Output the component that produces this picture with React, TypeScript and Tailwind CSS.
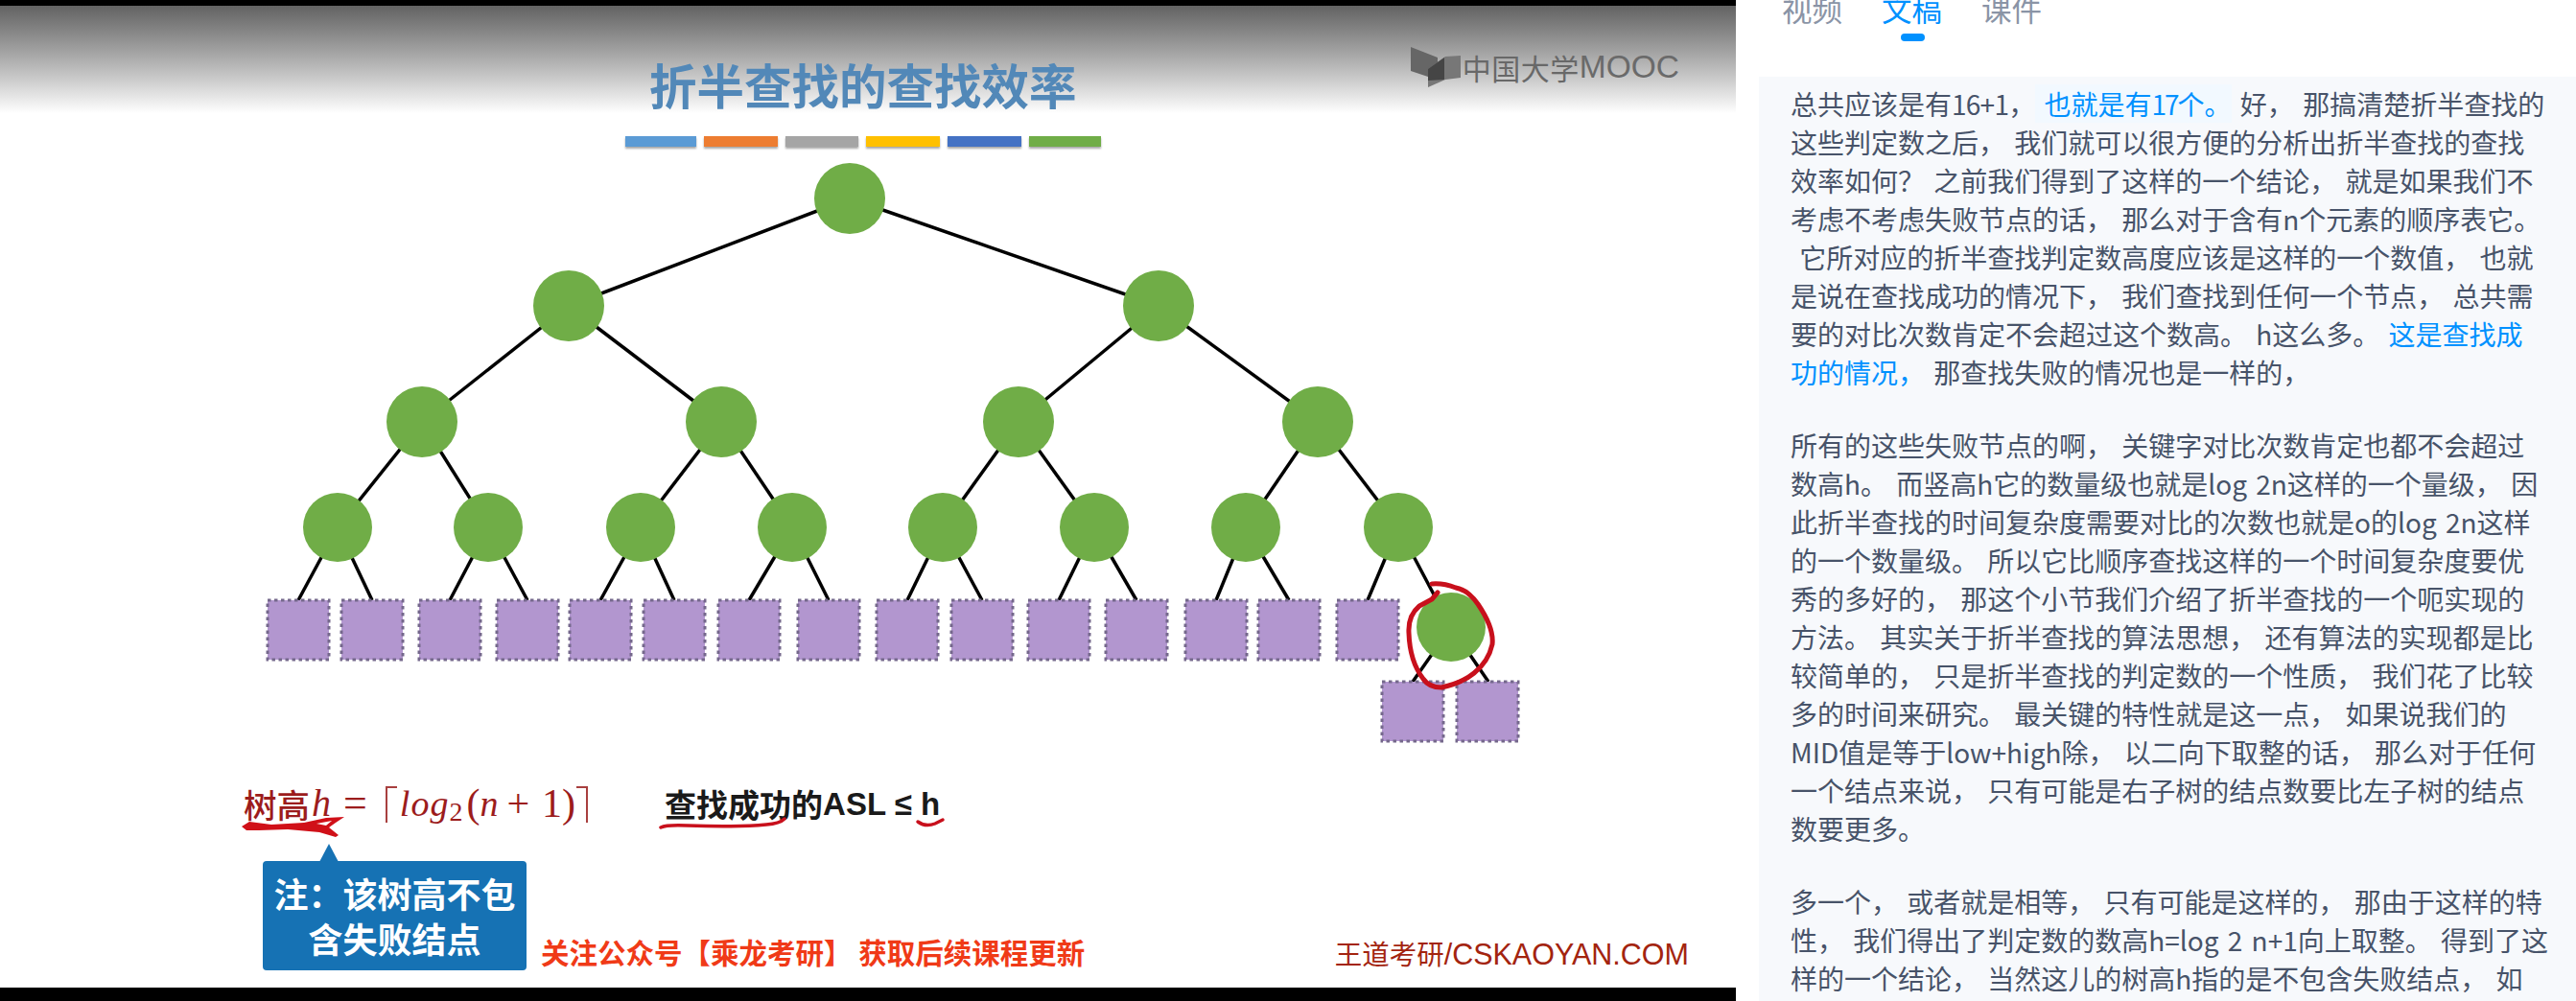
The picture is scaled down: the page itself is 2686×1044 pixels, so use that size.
const cjk = "[font-family:'Noto_Sans_CJK_SC',sans-serif]";
const serif = "[font-family:'Liberation_Serif',serif]";
const sans = "[font-family:'Liberation_Sans',sans-serif]";

const barColors = [
  { w: "w-[74px]", bg: "bg-[#5b9bd5]" },
  { w: "w-[77px]", bg: "bg-[#ed7d31]" },
  { w: "w-[76px]", bg: "bg-[#a5a5a5]" },
  { w: "w-[77px]", bg: "bg-[#ffc000]" },
  { w: "w-[77px]", bg: "bg-[#4472c4]" },
  { w: "w-[75px]", bg: "bg-[#70ad47]" },
];

const level2 = [593, 1208];
const level3 = [440, 752, 1062, 1374];
const level4 = [352, 509, 668, 826, 983, 1141, 1299, 1458];
const leafs = [311, 388, 469, 550, 626, 703, 781, 864, 946, 1024, 1104, 1185, 1268, 1344, 1426];

function Tree() {
  const edges: [number, number, number, number][] = [];
  level2.forEach((x) => edges.push([886, 207, x, 319]));
  level3.forEach((x, i) => edges.push([level2[Math.floor(i / 2)], 319, x, 440]));
  level4.forEach((x, i) => edges.push([level3[Math.floor(i / 2)], 440, x, 550]));
  leafs.forEach((x, i) => edges.push([level4[Math.floor(i / 2)], 550, x, 626]));
  edges.push([1458, 550, 1513, 654], [1513, 654, 1473, 711], [1513, 654, 1552, 711]);

  return (
    <svg width="1810" height="620" viewBox="0 160 1810 620" className="block mt-[7px]">
      {edges.map((e, i) => (
        <line key={i} x1={e[0]} y1={e[1]} x2={e[2]} y2={e[3]} stroke="#000" strokeWidth="3.5" />
      ))}
      {[886, ...level2].map((x, i) => (
        <ellipse key={x} cx={x} cy={i === 0 ? 207 : 319} rx="37" ry="37" fill="#70ad47" />
      ))}
      {level3.map((x) => (
        <circle key={x} cx={x} cy="440" r="37" fill="#70ad47" />
      ))}
      {level4.map((x) => (
        <circle key={x} cx={x} cy="550" r="36" fill="#70ad47" />
      ))}
      <circle cx="1513" cy="654" r="36" fill="#70ad47" />
      {leafs.map((x) => (
        <rect key={x} x={x - 32} y="626" width="64" height="62" fill="#b296cf" stroke="#75688c" strokeWidth="3" strokeDasharray="3.5 3.5" />
      ))}
      {[1473, 1551].map((x) => (
        <rect key={x} x={x - 32} y="711" width="64" height="62" fill="#b296cf" stroke="#75688c" strokeWidth="3" strokeDasharray="3.5 3.5" />
      ))}
      <path
        d="M1499 618 L1493 625 L1480 632 Q1468 642 1469 660 Q1470 690 1484 708 Q1490 717 1503 717 Q1525 712 1537 702 Q1552 690 1556 672 Q1558 655 1541 630 Q1530 615 1518 613 Q1505 608 1493 609"
        fill="none"
        stroke="#c8101c"
        strokeWidth="5"
        strokeLinecap="round"
        strokeLinejoin="round"
      />
    </svg>
  );
}

function MoocLogo() {
  return (
    <div className="flex items-center">
      <svg width="54" height="44" viewBox="0 0 54 44" className="shrink-0">
        <path d="M0 1 L28 12 L28 36 L18 32 L0 26 Z" fill="#666" />
        <path d="M18 24 L36 11 L52 10 L52 33 L36 35 L18 43 Z" fill="#777" />
        <path d="M18 24 L35 12 L35 35 L18 36 Z" fill="#454545" />
      </svg>
      <span className={`${cjk} text-[30px] leading-none tracking-[0.5px] text-[#686868]`}>中国大学</span>
      <span className={`${sans} text-[33.5px] leading-none text-[#6a6a6a]`}>MOOC</span>
    </div>
  );
}

function Formula() {
  const bracket = "inline-block w-[12px] h-[38px] mt-[2px] border-t-2 border-[#a8403f]";
  return (
    <div className="relative flex items-center h-[44px] text-[#9c1c1c]">
      <span className={`${cjk} text-[34.5px] leading-none font-medium`}>树高</span>
      <span className={`${serif} italic text-[40px] leading-none ml-[2px]`}>h</span>
      <span className={`${serif} text-[44px] leading-none ml-[13px]`}>=</span>
      <span className={`${bracket} border-l-2 ml-[19px] mr-[3px]`} />
      <span className={`${serif} italic text-[38px] leading-none tracking-[1px]`}>log</span>
      <span className={`${serif} text-[28px] leading-none mt-[18px]`}>2</span>
      <span className={`${serif} text-[42px] leading-none ml-[4px]`}>(</span>
      <span className={`${serif} italic text-[38px] leading-none`}>n</span>
      <span className={`${serif} text-[42px] leading-none ml-[9px]`}>+</span>
      <span className={`${serif} text-[42px] leading-none ml-[13px]`}>1)</span>
      <span className={`${bracket} border-r-2 ml-[1px]`} />
      <svg width="112" height="26" viewBox="0 0 112 26" className="absolute -left-[4px] top-[34px]">
        <path
          fillRule="evenodd"
          d="M2 12 L10 7 L33 10 L67 8 L90 3 L109 2 L100 8 L93 13 L103 21 L100 23 L83 18 L50 15 L20 16 L7 16 Z M80 9 L96 6 L90 11 Z"
          fill="#d01018"
        />
      </svg>
    </div>
  );
}

function Asl() {
  return (
    <div className={`${cjk} relative flex items-center h-[44px] ml-[80px] text-[33px] font-bold leading-none text-[#1a1a1a]`}>
      <span>查找成功的</span>
      <span className={sans}>ASL ≤ h</span>
      <svg width="300" height="16" viewBox="0 0 300 16" className="absolute -left-[6px] top-[36px]">
        <path d="M2 11 Q8 8 30 9 Q80 11 112 8 Q126 7 131 2" fill="none" stroke="#c8101c" strokeWidth="3.5" strokeLinecap="round" />
        <path d="M270 5 Q278 11 288 7 L296 3" fill="none" stroke="#c8101c" strokeWidth="3.5" strokeLinecap="round" />
      </svg>
    </div>
  );
}

function Callout() {
  return (
    <div className={`${cjk} relative flex flex-col items-center justify-center w-[275px] h-[114px] rounded-[4px] bg-[#1672b4] text-[36px] font-bold leading-[47px] text-white shrink-0`}>
      <span className="absolute -top-[18px] left-[59px] w-0 h-0 border-l-[10px] border-r-[10px] border-b-[19px] border-l-transparent border-r-transparent border-b-[#1672b4]" />
      <span>注：该树高不包</span>
      <span>含失败结点</span>
    </div>
  );
}

const para1 = [
  "这些判定数之后， 我们就可以很方便的分析出折半查找的查找",
  "效率如何？ 之前我们得到了这样的一个结论， 就是如果我们不",
  "考虑不考虑失败节点的话， 那么对于含有n个元素的顺序表它。",
  " 它所对应的折半查找判定数高度应该是这样的一个数值， 也就",
  "是说在查找成功的情况下， 我们查找到任何一个节点， 总共需",
];

const para2 = [
  "所有的这些失败节点的啊， 关键字对比次数肯定也都不会超过",
  "数高h。 而竖高h它的数量级也就是log 2n这样的一个量级， 因",
  "此折半查找的时间复杂度需要对比的次数也就是o的log 2n这样",
  "的一个数量级。 所以它比顺序查找这样的一个时间复杂度要优",
  "秀的多好的， 那这个小节我们介绍了折半查找的一个呃实现的",
  "方法。 其实关于折半查找的算法思想， 还有算法的实现都是比",
  "较简单的， 只是折半查找的判定数的一个性质， 我们花了比较",
  "多的时间来研究。 最关键的特性就是这一点， 如果说我们的",
  "MID值是等于low+high除， 以二向下取整的话， 那么对于任何",
  "一个结点来说， 只有可能是右子树的结点数要比左子树的结点",
  "数要更多。",
];

const para3 = [
  "多一个， 或者就是相等， 只有可能是这样的， 那由于这样的特",
  "性， 我们得出了判定数的数高h=log 2 n+1向上取整。 得到了这",
  "样的一个结论， 当然这儿的树高h指的是不包含失败结点， 如",
];

function Line({ children }: { children: React.ReactNode }) {
  return <div className="h-[40px] whitespace-pre">{children}</div>;
}

export default function App() {
  return (
    <div className="flex w-[2686px] h-[1044px] overflow-hidden bg-white">
      <div className="flex flex-col w-[1810px] shrink-0 bg-white">
        <div className="h-[6px] bg-black shrink-0" />
        <div className="flex-1 min-h-0">
          <div className="flex items-start justify-between h-[112px] pl-[677px] pr-[59px] bg-gradient-to-b from-[#636363] to-white">
            <h1 className={`${cjk} mt-[47px] text-[49.5px] font-bold leading-[70px] text-[#5288b8]`}>折半查找的查找效率</h1>
            <div className="mt-[42px]">
              <MoocLogo />
            </div>
          </div>
          <div className="flex gap-[8px] pl-[652px] mt-[24px] h-[11px]">
            {barColors.map((b) => (
              <div key={b.bg} className={`${b.w} ${b.bg} shadow-[0_2px_2px_rgba(0,0,0,0.35)]`} />
            ))}
          </div>
          <Tree />
          <div className="flex items-center pl-[254px] mt-[36px]">
            <Formula />
            <Asl />
          </div>
          <div className="flex items-center pl-[274px] pr-[49px] mt-[38px]">
            <Callout />
            <span className={`${cjk} ml-[15px] mt-[76px] text-[29.5px] font-bold leading-none text-[#f03a17] whitespace-pre`}>关注公众号【乘龙考研】 获取后续课程更新</span>
            <span className={`${cjk} ml-auto mt-[80px] text-[28.5px] leading-none text-[#a3240f] whitespace-pre`}>
              王道考研<span className={`${sans} text-[30.5px]`}>/CSKAOYAN.COM</span>
            </span>
          </div>
        </div>
        <div className="h-[14px] bg-black shrink-0" />
      </div>

      <div className={`${cjk} flex flex-col flex-1 min-w-0`}>
        <div className="flex gap-[41px] h-[80px] pl-[48px] -mt-[12px] text-[31.5px] leading-[40px] text-[#8a94a6]">
          <span>视频</span>
          <span className="relative text-[#0091ff]">
            文稿
            <span className="absolute left-[20px] top-[47px] w-[25px] h-[8px] rounded-full bg-[#0091ff]" />
          </span>
          <span>课件</span>
        </div>
        <div className="flex-1 ml-[24px] mt-[12px] pl-[33px] pt-[8px] bg-[#f7f9fc] text-[28px] leading-[40px] text-[#475369] [word-spacing:3px]">
          <div className="mb-[36px]">
            <Line>
              总共应该是有<span className="tracking-[-0.75px]">16+1</span>，
              <span className="bg-[#f2f9ff] text-[#0091ff]"> 也就是有<span className="tracking-[-2px]">17</span>个。</span> 好， 那搞清楚折半查找的
            </Line>
            {para1.map((t) => (
              <Line key={t}>{t}</Line>
            ))}
            <Line>
              要的对比次数肯定不会超过这个数高。 h这么多。 <span className="text-[#0091ff]">这是查找成</span>
            </Line>
            <Line>
              <span className="text-[#0091ff]">功的情况，</span> 那查找失败的情况也是一样的，
            </Line>
          </div>
          <div className="mb-[36px]">
            {para2.map((t) => (
              <Line key={t}>{t}</Line>
            ))}
          </div>
          <div>
            {para3.map((t) => (
              <Line key={t}>{t}</Line>
            ))}
          </div>
        </div>
      </div>
    </div>
  );
}
